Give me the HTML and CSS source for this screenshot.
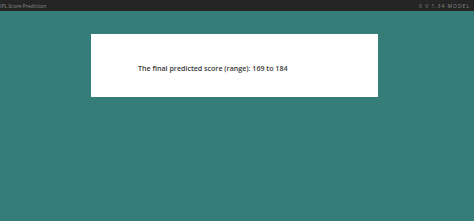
FILE: index.html
```html
<!DOCTYPE html>
<html lang="en">
<head>
  <meta charset="UTF-8">
  <meta name="viewport" content="width=device-width, initial-scale=1.0">
  <title>IPL Score Prediction</title>
  <link rel="stylesheet" href="styles.css">
</head>
<body>
  <div class="title-bar">
    <span class="app-name">IPL Score Prediction</span>
    <span class="app-status">0 V 1.34 MODEL</span>
  </div>
  <div class="main">
    <div class="result-card">
      <p class="result-text">The final predicted score (range): 169 to 184</p>
    </div>
  </div>
</body>
</html>
```

FILE: styles.css
```css
html, body {
  height: 100%;
}

body {
  margin: 0;
  font-family: "Open Sans", "Noto Sans", sans-serif;
  background-color: #357d78;
  display: flex;
  flex-direction: column;
}

.title-bar {
  height: 11px;
  background-color: #252526;
  color: #8a8a8a;
  font-size: 5px;
  display: flex;
  align-items: center;
  justify-content: space-between;
  padding: 0 4px 0 0;
  flex-shrink: 0;
}

.app-status {
  letter-spacing: 1px;
}

.main {
  flex: 1;
  padding: 23px 0 0 91px;
}

.result-card {
  width: 287px;
  height: 63px;
  background-color: #fff;
  display: flex;
  align-items: center;
  box-sizing: border-box;
  padding: 4px 0 0 47px;
}

.result-text {
  margin: 0;
  font-family: "Open Sans", "Noto Sans", sans-serif;
  font-size: 7.1px;
  font-weight: 600;
  color: #383838;
}
```
